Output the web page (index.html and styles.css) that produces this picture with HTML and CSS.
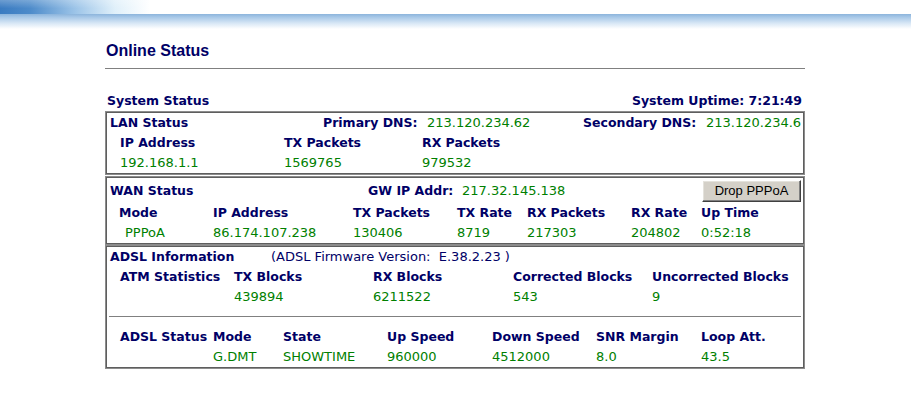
FILE: index.html
```html
<!DOCTYPE html>
<html lang="en">
<head>
<meta charset="utf-8">
<title>Online Status</title>
<link rel="stylesheet" href="styles.css">
</head>
<body>
<div class="banner"><div class="logo"></div></div>

<main class="page">
  <h1 class="title">Online Status</h1>

  <div class="sys">
    <span>System Status</span>
    <span>System Uptime: 7:21:49</span>
  </div>

  <section class="box">
    <div class="row lan-head">
      <b>LAN Status</b>
      <b>Primary DNS:</b>
      <span class="v">213.120.234.62</span>
      <b>Secondary DNS:</b>
      <span class="v clip">213.120.234.6</span>
    </div>
    <div class="row lan-cols">
      <b>IP Address</b><b>TX Packets</b><b>RX Packets</b>
    </div>
    <div class="row lan-cols">
      <span class="v">192.168.1.1</span><span class="v">1569765</span><span class="v">979532</span>
    </div>
  </section>

  <section class="box">
    <div class="row wan-head">
      <b>WAN Status</b>
      <b>GW IP Addr:</b>
      <span class="v">217.32.145.138</span>
      <button class="btn" type="button">Drop PPPoA</button>
    </div>
    <div class="row wan-cols">
      <b>Mode</b><b>IP Address</b><b>TX Packets</b><b>TX Rate</b><b>RX Packets</b><b>RX Rate</b><b>Up Time</b>
    </div>
    <div class="row wan-cols">
      <span class="v indent">PPPoA</span><span class="v">86.174.107.238</span><span class="v">130406</span><span class="v">8719</span><span class="v">217303</span><span class="v">204802</span><span class="v">0:52:18</span>
    </div>
  </section>

  <section class="box adsl">
    <div class="row adsl-head">
      <b>ADSL Information</b>
      <span class="note">(ADSL Firmware Version:&nbsp; E.38.2.23 )</span>
    </div>
    <div class="row atm-cols">
      <b>ATM Statistics</b><b>TX Blocks</b><b>RX Blocks</b><b>Corrected Blocks</b><b>Uncorrected Blocks</b>
    </div>
    <div class="row atm-cols">
      <span></span><span class="v">439894</span><span class="v">6211522</span><span class="v">543</span><span class="v">9</span>
    </div>
    <div class="sep"><hr></div>
    <div class="row line-cols">
      <b>ADSL Status</b><b>Mode</b><b>State</b><b>Up Speed</b><b>Down Speed</b><b>SNR Margin</b><b>Loop Att.</b>
    </div>
    <div class="row line-cols">
      <span></span><span class="v">G.DMT</span><span class="v">SHOWTIME</span><span class="v">960000</span><span class="v">4512000</span><span class="v">8.0</span><span class="v">43.5</span>
    </div>
  </section>
</main>
</body>
</html>
```

FILE: styles.css
```css
body {
  margin: 0;
  background: #fff;
  color: #000066;
  font-family: "DejaVu Sans", Verdana, sans-serif;
  font-size: 13px;
}

/* top banner: blue rule fading downward, logo corner on the left */
.banner {
  height: 30px;
  background: linear-gradient(to bottom,
    #fff 0, #fff 14px,
    #8cb4dc 14px, #a6c7e7 17px, #d6e6f5 23px, #fff 29px);
}
.logo {
  width: 150px;
  height: 14px;
  background:
    linear-gradient(to bottom, rgba(255,255,255,0.25), rgba(255,255,255,0) 60%),
    linear-gradient(to right, #3a7bc1 0, #4d8bca 30px, #9cc4e8 75px, #e0f0fa 115px, rgba(255,255,255,0) 150px);
}

.page {
  width: 700px;
  margin: 0 0 0 105px;
}

.title {
  margin: 11px 0 0;
  padding: 0 0 7px 1px;
  font: bold 16px/20px "Liberation Sans", Arial, sans-serif;
  color: #000066;
  border-bottom: 1px solid #808080;
}

.sys {
  display: flex;
  justify-content: space-between;
  margin-top: 22px;
  padding: 0 3px 0 2px;
  line-height: 20px;
  font-weight: bold;
  font-size: 12.5px;
}

/* framed status groups */
.box {
  border: 1px solid #8c8c8c;
  box-shadow: inset 0 0 0 1px #5e5e5e;
  padding: 1px;
}
.box + .box {
  margin-top: 1px;
}
.box.adsl {
  margin-top: 0;
}

.row {
  display: grid;
  align-items: center;
  height: 20px;
  line-height: 20px;
  white-space: nowrap;
}
.row b {
  font-weight: bold;
  font-size: 12.5px;
}
.v {
  color: #008000;
}
.clip {
  overflow: hidden;
}
.indent {
  padding-left: 6px;
}
.note {
  color: #000066;
}

.lan-head {
  padding-left: 3px;
  grid-template-columns: 213px 104px 156px 123px 1fr;
}
.lan-cols {
  padding-left: 13px;
  grid-template-columns: 164px 138px 1fr;
}

.wan-head {
  height: 25px;
  padding: 0 2px 0 3px;
  grid-template-columns: 258px 94px 1fr 99px;
}
.wan-cols {
  padding-left: 12px;
  grid-template-columns: 94px 140px 104px 70px 104px 70px 1fr;
}

.adsl-head {
  padding-left: 3px;
  grid-template-columns: 161px 1fr;
}
.atm-cols {
  padding-left: 13px;
  grid-template-columns: 114px 139px 140px 139px 1fr;
}
.line-cols {
  padding-left: 13px;
  grid-template-columns: 93px 70px 104px 105px 104px 105px 1fr;
}

.sep {
  height: 20px;
  display: flex;
  align-items: center;
  padding: 0 2px;
}
.sep hr {
  flex: 1;
  margin: 0;
  border: 0;
  border-top: 1px solid #808080;
  position: relative;
  top: -1px;
}

/* classic raised push button */
.btn {
  width: 99px;
  height: 22px;
  padding: 0;
  background: #d4d0c8;
  color: #000;
  font: 13px/18px "Liberation Sans", Arial, sans-serif;
  border: 1px solid;
  border-color: #fff #404040 #404040 #fff;
  box-shadow: inset -1px -1px 0 #808080, inset 1px 1px 0 #e4e2dc;
}
```
